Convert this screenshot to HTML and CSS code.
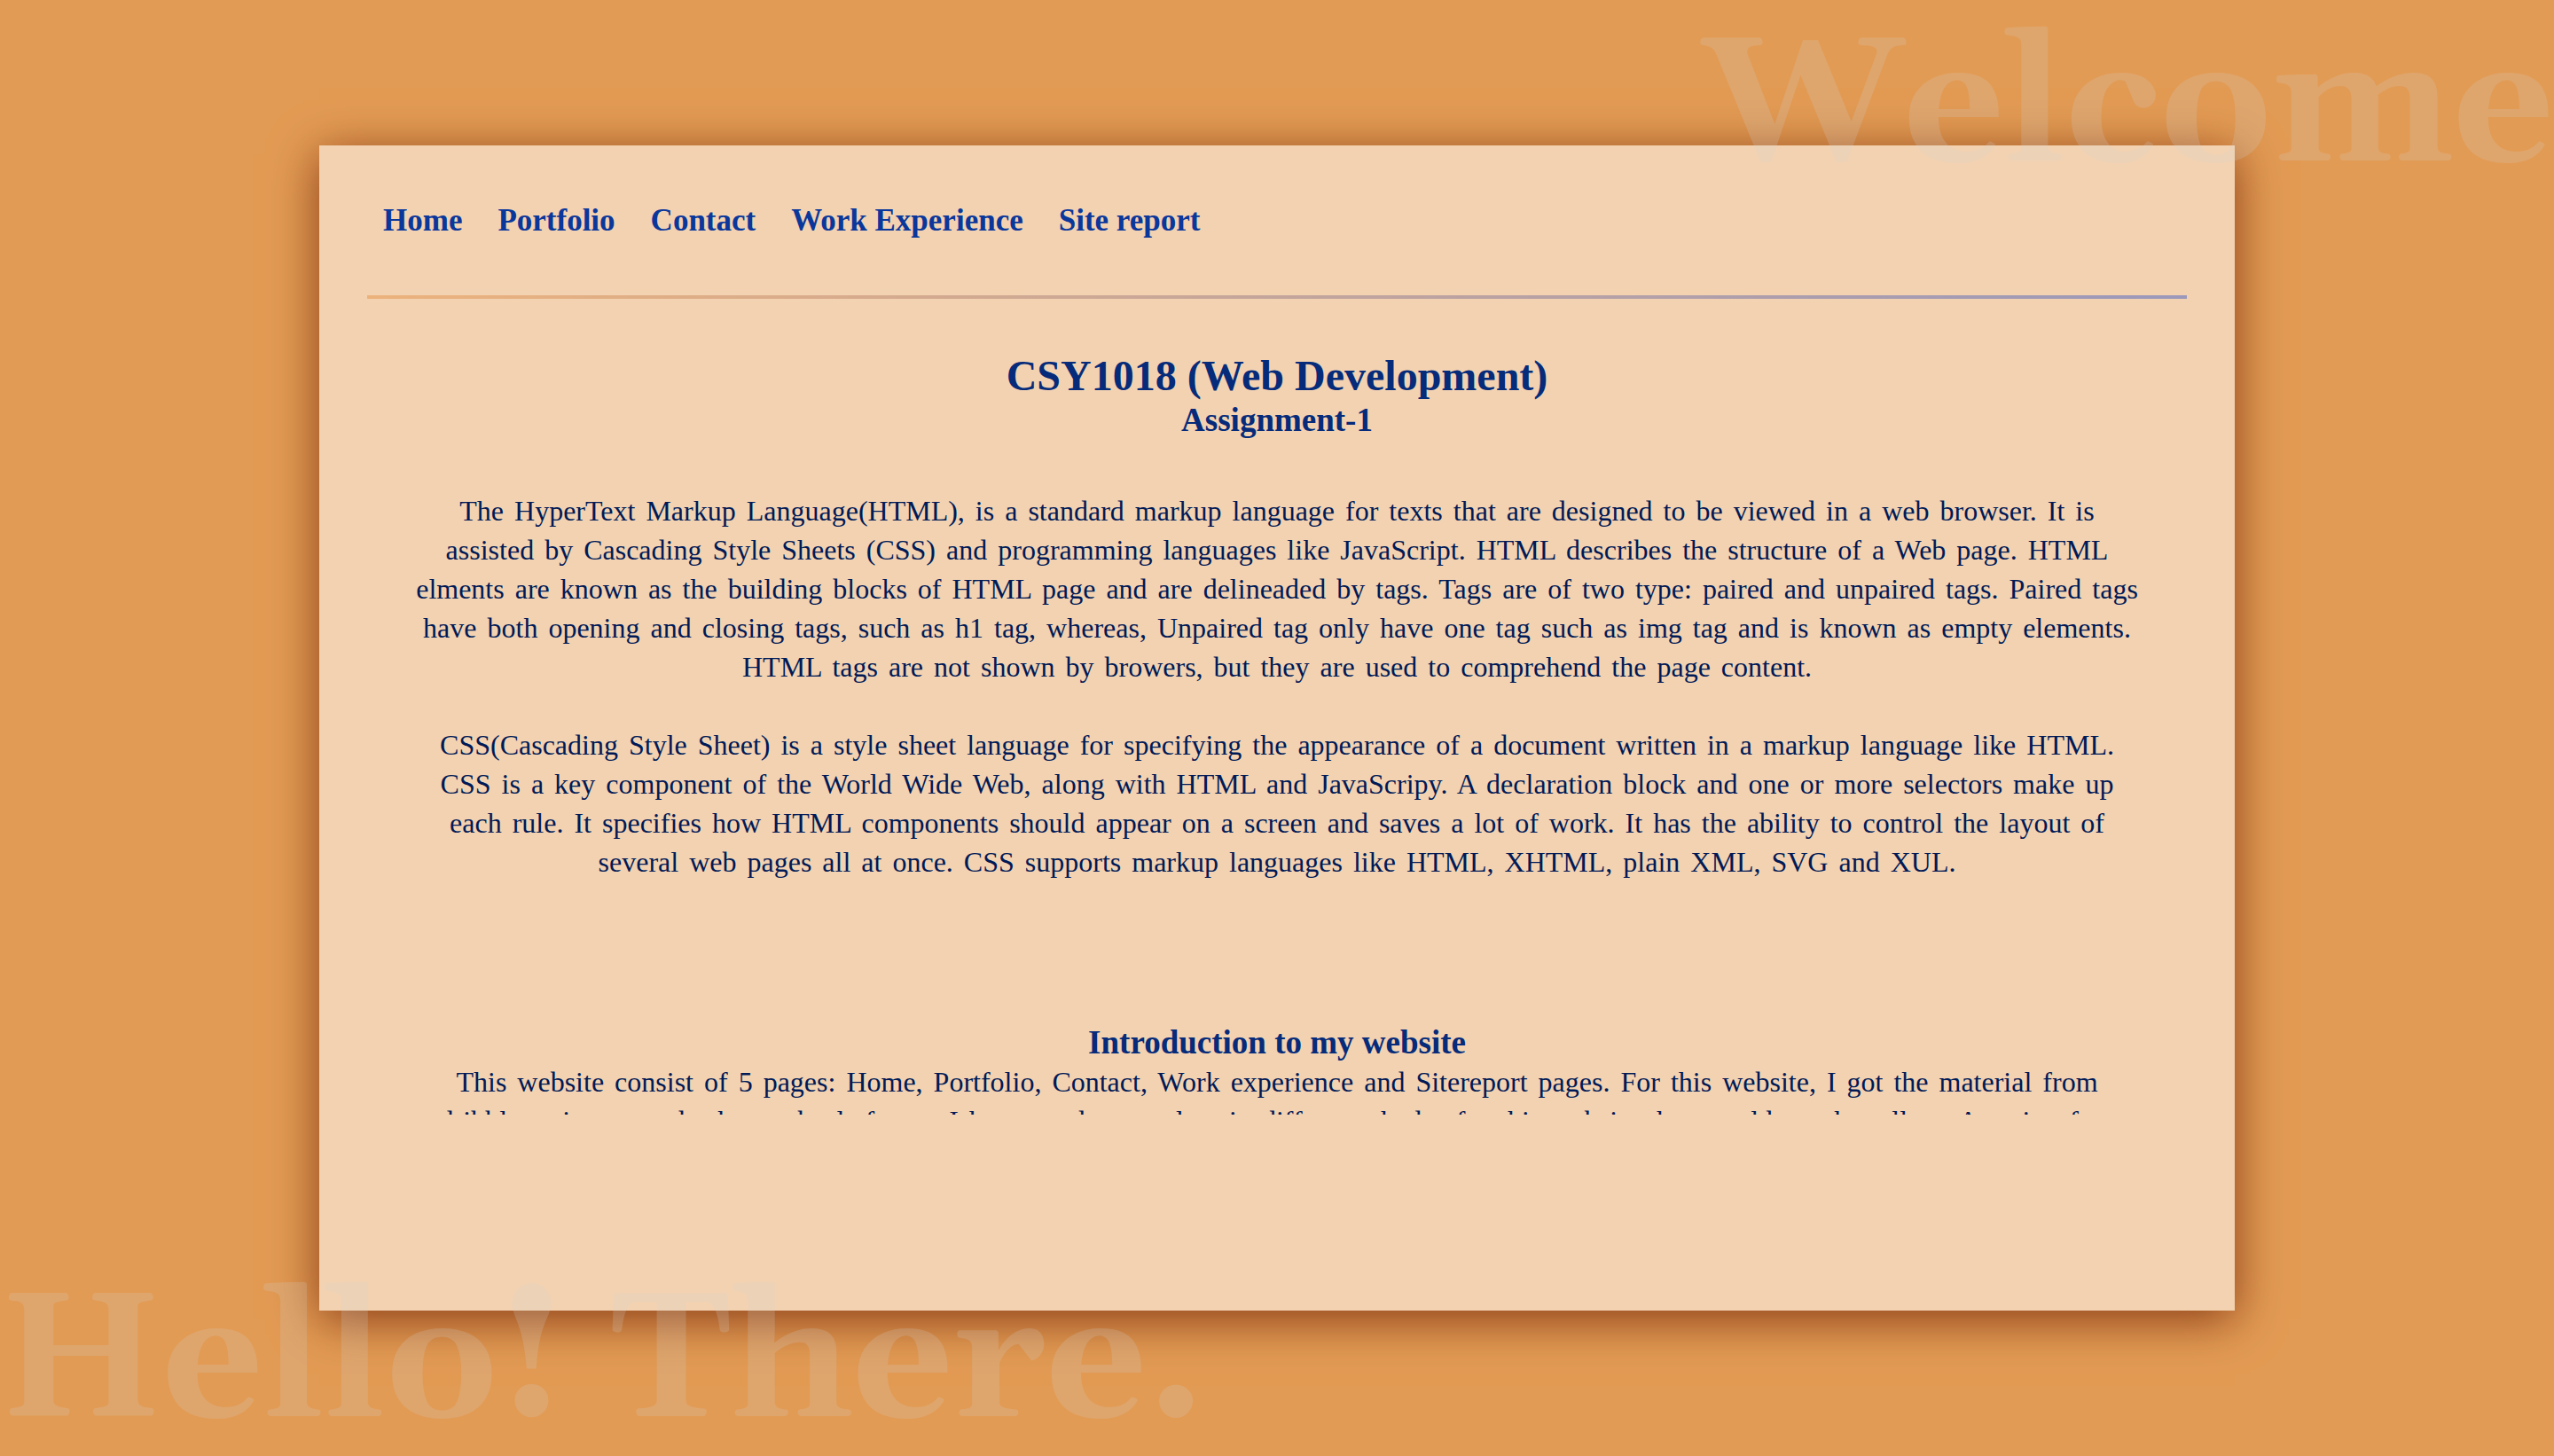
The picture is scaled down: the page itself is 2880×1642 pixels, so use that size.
FILE: index.html
```html
<!DOCTYPE html>
<html lang="en">
<head>
<meta charset="utf-8">
<title>Site report</title>
<link rel="stylesheet" href="styles.css">
</head>
<body>
<main class="card">
  <nav class="nav">
    <a href="#home">Home</a>
    <a href="#portfolio">Portfolio</a>
    <a href="#contact">Contact</a>
    <a href="#work">Work Experience</a>
    <a href="#report">Site report</a>
  </nav>
  <div class="content">
    <h1>CSY1018 (Web Development)</h1>
    <h2>Assignment-1</h2>
    <div class="about">
      <p>The HyperText Markup Language(HTML), is a standard markup language for texts that are designed to be viewed in a web browser. It is assisted by Cascading Style Sheets (CSS) and programming languages like JavaScript. HTML describes the structure of a Web page. HTML elments are known as the building blocks of HTML page and are delineaded by tags. Tags are of two type: paired and unpaired tags. Paired tags have both opening and closing tags, such as h1 tag, whereas, Unpaired tag only have one tag such as img tag and is known as empty elements. HTML tags are not shown by browers, but they are used to comprehend the page content.</p>
      <p>CSS(Cascading Style Sheet) is a style sheet language for specifying the appearance of a document written in a markup language like HTML. CSS is a key component of the World Wide Web, along with HTML and JavaScripy. A declaration block and one or more selectors make up each rule. It specifies how HTML components should appear on a screen and saves a lot of work. It has the ability to control the layout of several web pages all at once. CSS supports markup languages like HTML, XHTML, plain XML, SVG and XUL.</p>
    </div>
    <h2>Introduction to my website</h2>
    <p>This website consist of 5 pages: Home, Portfolio, Contact, Work experience and Sitereport pages. For this website, I got the material from dribble , pintrest and other web platforms. I have used two colors in different shades for this website that would speak well as. A main of us</p>
  </div>
</main>
<div class="mark mark-top">Welcome</div>
<div class="mark mark-bottom">Hello! There.</div>
</body>
</html>
```

FILE: styles.css
```css
* {
  box-sizing: border-box;
  margin: 0;
  padding: 0;
}

body {
  min-height: 100vh;
  padding: 10vh 12.5%;
  background: #e29b54;
  color: #001a57;
  font-family: "Liberation Serif", "Times New Roman", serif;
  font-size: 32px;
  line-height: 44px;
}

.card {
  height: 80vh;
  padding: 0 2.5%;
  background: #f3d2b1;
  box-shadow: 0 10px 50px #8a3d16;
}

.nav {
  display: flex;
  align-items: center;
  gap: 40px;
  height: 173px;
  padding: 0 18px;
  border-bottom: 4px solid;
  border-image: linear-gradient(to right, #ecb27c, #9b98bb) 1;
}

.nav a {
  color: #0a379b;
  font-size: 35px;
  font-weight: bold;
  text-decoration: none;
}

/* Scrolls inside the card, with the bar hidden */
.content {
  height: 70%;
  padding: 59px 2.5% 0;
  overflow-y: auto;
  scrollbar-width: none;
  text-align: center;
}

h1,
h2 {
  color: #052b7a;
}

h1 {
  font-size: 48px;
  line-height: 56px;
}

h2 {
  font-size: 37px;
  line-height: 44px;
}

.about {
  display: grid;
  gap: 44px;
  padding: 58px 0 160px;
}

.content p {
  word-spacing: 4px;
}

/* Large faint greetings over the corners of the page */
.mark {
  position: absolute;
  color: lightgray;
  opacity: 0.2;
  font-family: Georgia, Gelasio, "DejaVu Serif", serif;
  font-size: 200px;
  font-weight: bold;
  line-height: 208px;
  white-space: nowrap;
  pointer-events: none;
}

.mark-top {
  top: 18px;
  right: 0;
}

.mark-bottom {
  bottom: 0;
  left: 0;
}
```
